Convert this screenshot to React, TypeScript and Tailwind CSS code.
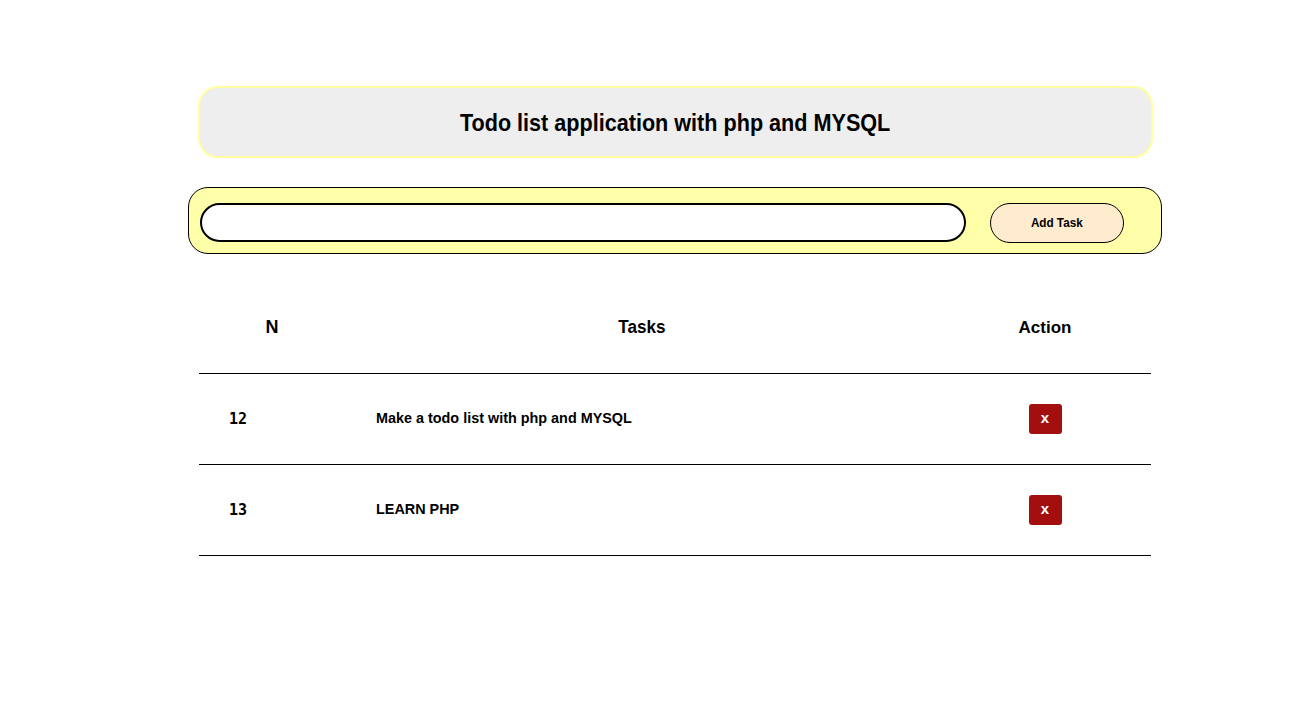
import React from 'react';

const tasks = [
  { id: 12, title: 'Make a todo list with php and MYSQL' },
  { id: 13, title: 'LEARN PHP' },
];

const App: React.FC = () => {
  return (
    <div className="min-h-[712px] bg-white pt-[86px] font-['Liberation_Sans',Arial,sans-serif] text-black">
      {/* Heading */}
      <div className="ml-[198px] w-[955px] rounded-[20px] border-2 border-[#ffffa0] bg-[#eeeeee] h-[72px] flex items-center justify-center">
        <h1 className="inline-block scale-x-[0.9] text-[24px] font-bold pt-[1px]">
          Todo list application with php and MYSQL
        </h1>
      </div>

      {/* Form */}
      <form className="mt-[29px] ml-[188px] w-[974px] h-[67px] rounded-[20px] border border-black bg-[#ffffaa] flex items-center pl-[11px] pt-[4px]">
        <input
          type="text"
          className="w-[766px] h-[39px] rounded-[20px] border-2 border-black bg-white outline-none px-3"
        />
        <button
          type="button"
          className="ml-[24px] w-[134px] h-[40px] rounded-[20px] border border-black bg-[#ffebcd] text-[13px] font-bold"
        >
          <span className="inline-block scale-x-[0.9]">Add Task</span>
        </button>
      </form>

      {/* Table */}
      <table className="mt-[28px] ml-[199px] w-[952px] border-collapse">
        <thead>
          <tr className="h-[91px] border-b border-black">
            <th className="w-[146px] text-[18px] font-bold">N</th>
            <th className="w-[594px] text-[18px] font-bold">
              <span className="inline-block scale-x-[0.95]">Tasks</span>
            </th>
            <th className="text-[17px] font-bold">Action</th>
          </tr>
        </thead>
        <tbody>
          {tasks.map((t) => (
            <tr key={t.id} className="h-[91px] border-b border-black">
              <td className="pl-[30px] pt-[1px] text-[15px] font-bold font-['DejaVu_Sans_Mono',monospace]">{t.id}</td>
              <td className="pl-[31px] pt-[1px] text-[14.4px] font-bold">{t.title}</td>
              <td className="text-center">
                <button className="w-[33px] h-[30px] rounded-[3px] bg-[#a30e0e] text-white text-[15px] font-bold">
                  x
                </button>
              </td>
            </tr>
          ))}
        </tbody>
      </table>
    </div>
  );
};

export default App;
